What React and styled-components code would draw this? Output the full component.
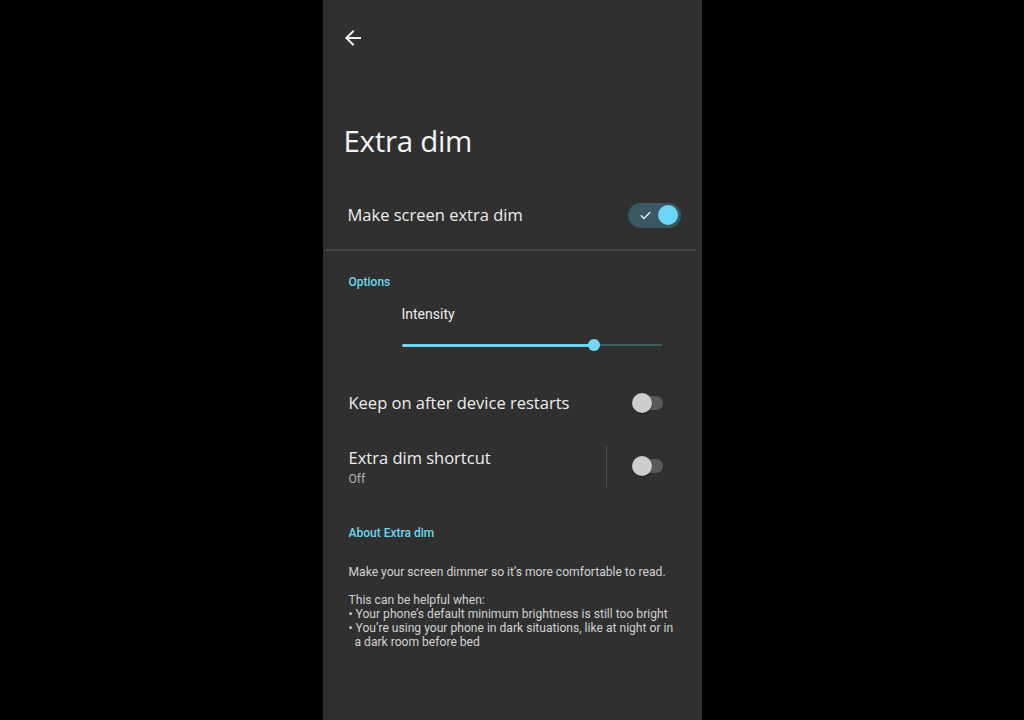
import React from 'react';
import styled, { createGlobalStyle } from 'styled-components';

const GlobalStyle = createGlobalStyle`
  html, body {
    margin: 0;
    padding: 0;
    background: #000;
  }
  body {
    font-family: Roboto, "Liberation Sans", sans-serif;
    -webkit-font-smoothing: antialiased;
  }
`;

const Screen = styled.div`
  width: 379px;
  height: 720px;
  margin: 0 auto;
  background: #303030;
  display: flex;
  flex-direction: column;
  overflow: hidden;
`;

const TopBar = styled.div`
  height: 76px;
  display: flex;
  align-items: center;
  padding-left: 18px;
`;

const BackButton = styled.button`
  width: 24px;
  height: 24px;
  padding: 0;
  border: none;
  background: none;
  color: #f2f2f2;
  display: flex;
  cursor: pointer;
`;

const Title = styled.h1`
  margin: 45px 0 0;
  padding-left: 21px;
  font-family: "Open Sans", Roboto, sans-serif;
  font-weight: 400;
  font-size: 29.5px;
  line-height: 40px;
  color: #f4f4f4;
  letter-spacing: -0.3px;
`;

const Row = styled.div`
  display: flex;
  align-items: center;
  justify-content: space-between;
  height: ${p => p.height}px;
  margin-top: ${p => p.top || 0}px;
  padding: 0 ${p => p.right}px 0 ${p => p.left}px;
`;

const RowLabel = styled.div`
  font-family: "Open Sans", Roboto, sans-serif;
  font-size: 16.5px;
  line-height: 24px;
  color: #ededed;
`;

const RowSummary = styled.div`
  font-size: 12px;
  line-height: 18px;
  color: #b4b4b4;
`;

const Divider = styled.div`
  height: 2px;
  margin: 2px 6px 0 3px;
  background: #454545;
`;

const SectionHeader = styled.div`
  margin-top: ${p => p.top}px;
  padding-left: 26px;
  font-size: 12px;
  font-weight: 500;
  line-height: 20px;
  color: #6fd5f2;
`;

const SliderLabel = styled.div`
  margin-top: 12px;
  padding-left: 79px;
  font-size: 14px;
  line-height: 20px;
  color: #ececec;
`;

const SliderTrack = styled.div`
  position: relative;
  margin: 11px 0 0 79px;
  width: 260px;
  height: 20px;
  display: flex;
  align-items: center;
`;

const TrackFill = styled.div`
  height: 3px;
  border-radius: 2px;
  background: #6dd4f1;
`;

const TrackRest = styled.div`
  flex: 1;
  height: 2px;
  background: #3f5d67;
`;

const SliderThumb = styled.div`
  position: absolute;
  top: 4px;
  width: 12px;
  height: 12px;
  margin-left: -6px;
  border-radius: 50%;
  background: #72d8f6;
`;

const SwitchOn = styled.div`
  width: 53px;
  height: 25px;
  box-sizing: border-box;
  border-radius: 13px;
  background: #3a5862;
  display: flex;
  align-items: center;
  justify-content: space-between;
  padding: 0 3px 0 11px;
`;

const Knob = styled.div`
  width: 20px;
  height: 20px;
  border-radius: 50%;
  background: ${p => p.on ? '#6cd6f8' : '#cdcdcd'};
  box-shadow: ${p => p.on ? 'none' : '0 1px 2px rgba(0,0,0,0.35)'};
`;

const SwitchOff = styled.div`
  position: relative;
  width: 31px;
  height: 20px;
  display: flex;
  align-items: center;
`;

const OffTrack = styled.div`
  position: absolute;
  right: 0;
  top: 3px;
  width: 26px;
  height: 14px;
  border-radius: 7px;
  background: #595959;
`;

const OffKnob = styled(Knob)`
  position: relative;
`;

const TextBlock = styled.div`
  display: flex;
  flex-direction: column;
  padding-top: 2px;
`;

const SplitEnd = styled.div`
  display: flex;
  align-items: center;
  height: 100%;
`;

const VRule = styled.div`
  width: 1px;
  height: 41px;
  background: #4c4c4c;
  margin-right: 25px;
`;

const Body = styled.div`
  margin-top: 22px;
  padding-left: 26px;
  font-size: 12.1px;
  line-height: 14px;
  color: #d2d2d2;
  white-space: pre;
`;

const BackArrow = () => (
  <svg width="24" height="24" viewBox="0 0 24 24" fill="currentColor">
    <path d="M20 11H7.83l5.59-5.59L12 4l-8 8 8 8 1.41-1.41L7.83 13H20v-2z" />
  </svg>
);

const Check = () => (
  <svg width="13" height="13" viewBox="0 0 24 24" fill="none" stroke="#e8f2f4" strokeWidth="2.6" strokeLinecap="round" strokeLinejoin="round">
    <path d="M4 12.5l5 5L20 6.5" />
  </svg>
);

const Toggle = ({ on }) => on ? (
  <SwitchOn>
    <Check />
    <Knob on />
  </SwitchOn>
) : (
  <SwitchOff>
    <OffTrack />
    <OffKnob />
  </SwitchOff>
);

const intensity = 74.2;

const about = [
  'Make your screen dimmer so it\u2019s more comfortable to read.',
  '',
  'This can be helpful when:',
  '\u2022 Your phone\u2019s default minimum brightness is still too bright',
  '\u2022 You\u2019re using your phone in dark situations, like at night or in',
  '  a dark room before bed',
].join('\n');

export default function App() {
  return (
    <>
      <GlobalStyle />
      <Screen>
        <TopBar>
          <BackButton aria-label="Back">
            <BackArrow />
          </BackButton>
        </TopBar>
        <Title>Extra dim</Title>

        <Row height={64} top={22} left={25} right={21}>
          <RowLabel>Make screen extra dim</RowLabel>
          <Toggle on />
        </Row>
        <Divider />

        <SectionHeader top={21}>Options</SectionHeader>
        <SliderLabel>Intensity</SliderLabel>
        <SliderTrack>
          <TrackFill style={{ width: `${intensity}%` }} />
          <TrackRest />
          <SliderThumb style={{ left: `${intensity}%` }} />
        </SliderTrack>

        <Row height={56} top={20} left={26} right={39}>
          <RowLabel>Keep on after device restarts</RowLabel>
          <Toggle />
        </Row>

        <Row height={70} left={26} right={39}>
          <TextBlock>
            <RowLabel>Extra dim shortcut</RowLabel>
            <RowSummary>Off</RowSummary>
          </TextBlock>
          <SplitEnd>
            <VRule />
            <Toggle />
          </SplitEnd>
        </Row>

        <SectionHeader top={22}>About Extra dim</SectionHeader>
        <Body>{about}</Body>
      </Screen>
    </>
  );
}
